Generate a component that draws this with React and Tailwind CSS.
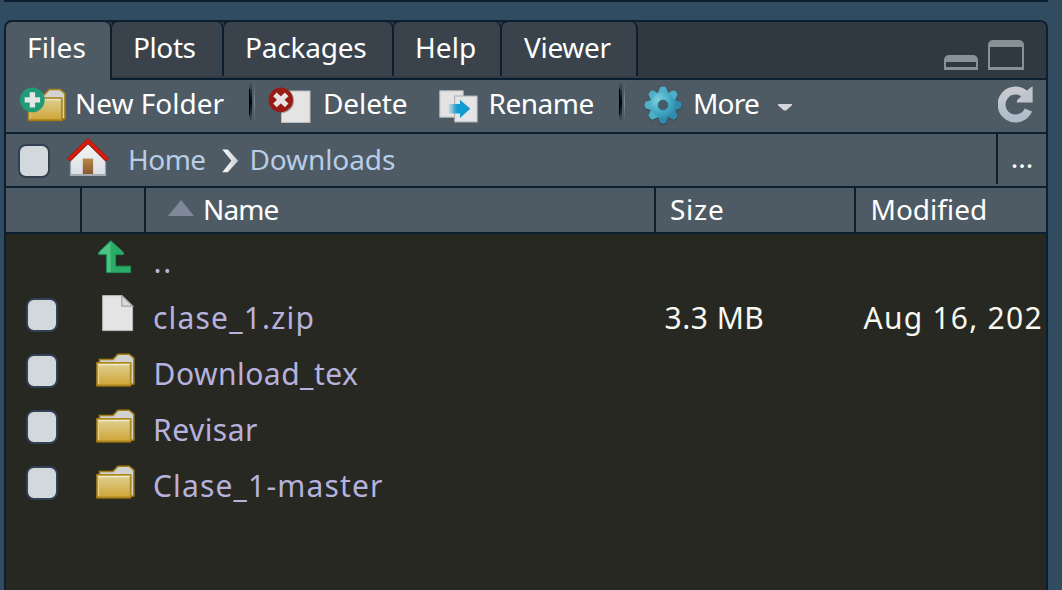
import React from "react";

function FolderShape() {
  return (
    <g>
      <path d="M3.5 20V6.5H17L22 1.2H33L37.8 5.2V31H30" fill="#d2d2d0" stroke="#a5801a" strokeWidth="1.6" />
      <path d="M34.8 11V30" stroke="#a5801a" strokeWidth="1" />
      <rect x="1" y="9.8" width="33.6" height="22.6" fill="url(#folderFront)" stroke="#ad871c" strokeWidth="1.6" />
      <path d="M2 11.6H33.6" stroke="#f0ecd0" strokeWidth="1.2" />
      <path d="M2.6 12V31" stroke="#e6d79a" strokeWidth="1" />
      <path d="M0.5 32.8H35" stroke="#a57c14" strokeWidth="1.4" />
    </g>
  );
}

function Gradients() {
  return (
    <svg className="absolute h-0 w-0" aria-hidden="true">
      <defs>
        <linearGradient id="folderFront" x1="0" y1="0" x2="0" y2="1">
          <stop offset="0" stopColor="#ddd294" />
          <stop offset="1" stopColor="#cfa436" />
        </linearGradient>
        <radialGradient id="gear" gradientUnits="userSpaceOnUse" cx="-5" cy="-5" r="24">
          <stop offset="0" stopColor="#7cd2de" />
          <stop offset="0.5" stopColor="#46a9c4" />
          <stop offset="1" stopColor="#2580a4" />
        </radialGradient>
        <linearGradient id="wall" x1="0" y1="0" x2="0" y2="1">
          <stop offset="0" stopColor="#f6f6f7" />
          <stop offset="1" stopColor="#dadee3" />
        </linearGradient>
        <linearGradient id="door" x1="0" y1="0" x2="0" y2="1">
          <stop offset="0" stopColor="#b9864a" />
          <stop offset="1" stopColor="#87592f" />
        </linearGradient>
        <linearGradient id="move" x1="0" y1="0" x2="1" y2="0">
          <stop offset="0" stopColor="#129bd2" stopOpacity="0.1" />
          <stop offset="0.4" stopColor="#129bd2" />
        </linearGradient>
        <linearGradient id="refresh" x1="0" y1="0" x2="0" y2="1">
          <stop offset="0" stopColor="#c9cad0" />
          <stop offset="1" stopColor="#aebccb" />
        </linearGradient>
        <linearGradient id="chevron" x1="0" y1="0" x2="1" y2="0">
          <stop offset="0" stopColor="#ffffff" />
          <stop offset="1" stopColor="#c8cbce" />
        </linearGradient>
      </defs>
    </svg>
  );
}

function FolderIcon() {
  return (
    <svg width="40" height="34" viewBox="0 0 40 34" className="shrink-0">
      <FolderShape />
    </svg>
  );
}

function NewFolderIcon() {
  return (
    <svg width="48" height="38" viewBox="0 0 48 38" className="shrink-0">
      <g transform="translate(7.5 1.4) scale(0.99 0.98)">
        <FolderShape />
      </g>
      <circle cx="12.3" cy="12.9" r="12.4" fill="#209b76" />
      <path d="M12.4 5.2V20.6M4.7 12.9H20.1" stroke="#e4e6e5" strokeWidth="5.4" />
    </svg>
  );
}

function DeleteIcon() {
  return (
    <svg width="46" height="38" viewBox="0 0 46 38" className="shrink-0">
      <rect x="13.5" y="4" width="28.5" height="31.5" fill="#e4e4e4" stroke="#b9bcbe" strokeWidth="1" />
      <circle cx="13.8" cy="13.8" r="12.4" fill="#3d474f" opacity="0.35" />
      <circle cx="12.8" cy="12.9" r="12.3" fill="#981b14" />
      <path d="M6.9 7.4L18.7 18.4M18.7 7.4L6.9 18.4" stroke="#e6e2e1" strokeWidth="5.2" />
    </svg>
  );
}

function RenameIcon() {
  return (
    <svg width="40" height="34" viewBox="0 0 40 34" className="shrink-0">
      <rect x="0.8" y="0.8" width="23.4" height="26.4" fill="#e3e3e3" stroke="#b5b8ba" strokeWidth="1" />
      <rect x="15.6" y="6" width="22.6" height="26" fill="#e5e5e5" stroke="#a9acaf" strokeWidth="1" />
      <path d="M9.5 14H21V9.8L31.3 18.8L21 28V23.6H9.5Z" fill="url(#move)" />
    </svg>
  );
}

const TEETH = [0, 45, 90, 135, 180, 225, 270, 315];

const GEAR_BUMP = "M-5.4 -11L-2.9 -17.8Q0 -19.4 2.9 -17.8L5.4 -11Z";

function GearIcon() {
  return (
    <svg width="40" height="42" viewBox="-20 -21 40 42" className="shrink-0">
      <g fill="#33454f" stroke="#33454f" strokeWidth="1.2" opacity="0.6" transform="translate(0 0.8)">
        <circle r="13" />
        {TEETH.map((a) => (
          <path key={a} d={GEAR_BUMP} transform={`rotate(${a})`} />
        ))}
      </g>
      <circle r="12.8" fill="url(#gear)" />
      {TEETH.map((a) => (
        <path key={a} fill={a > 60 && a < 200 ? "#2f8cae" : "#4cb0c8"} d={GEAR_BUMP} transform={`rotate(${a})`} />
      ))}
      <circle r="12.4" fill="url(#gear)" />
      <circle r="4.9" fill="#4a5963" stroke="#2c7089" strokeWidth="1" />
    </svg>
  );
}

function RefreshIcon() {
  return (
    <svg width="37" height="38" viewBox="0 0 37 38" className="shrink-0">
      <path d="M28.2 10.4A14 14 0 1 0 30.4 25" fill="none" stroke="url(#refresh)" strokeWidth="8" />
      <path d="M34.6 1.2V17.4H18.6L19.2 15L31 3.8Z" fill="#c0c5cd" />
    </svg>
  );
}

function HomeIcon() {
  return (
    <svg width="42" height="39" viewBox="0 0 42 39" className="shrink-0">
      <path d="M3.5 20L21 3L38.5 20V37.5H3.5Z" fill="url(#wall)" stroke="#9aa6ae" strokeWidth="1.2" />
      <path d="M3 37H39" stroke="#a5aeb5" strokeWidth="2.2" />
      <rect x="15.8" y="20.6" width="10.3" height="15.4" fill="url(#door)" />
      <path d="M1.6 22.2L21 3.2L40.4 22.2" fill="none" stroke="#8a1a16" strokeWidth="4.6" />
      <path d="M1.8 21.6L21 2.8L40.2 21.6" fill="none" stroke="#dc1c09" strokeWidth="3.2" />
    </svg>
  );
}

function UpIcon() {
  return (
    <svg width="34" height="34" viewBox="0 0 34 34" className="shrink-0">
      <path d="M12.8 0.8L25.4 12.2V14.6H17.6V26.2H32.6V32.6H8.4V14.6H0.6V12.2Z" fill="#29ac68" stroke="#1e9257" strokeWidth="1" />
      <path d="M12.6 1.8L2 12V13.8H9.2V32H12.8Z" fill="#4fc284" />
    </svg>
  );
}

function FileIcon() {
  return (
    <svg width="32" height="37" viewBox="0 0 32 37" className="shrink-0">
      <path d="M0.6 0.6H20L30.6 11.2V35.6H0.6Z" fill="#e4e4e4" stroke="#b8b8b8" strokeWidth="1" />
      <path d="M19.8 0.6V11.2H30.8Z" fill="#d9dada" stroke="#a3a6a8" strokeWidth="1.3" />
    </svg>
  );
}

function Separator() {
  return (
    <span className="flex h-10 w-1.5">
      <span className="w-[3px] bg-linear-to-b from-transparent via-black via-50% to-transparent" />
      <span className="-ml-[3px] mt-[7px] h-[26px] w-0.5 bg-black" />
      <span className="ml-1 w-px bg-linear-to-b from-transparent via-[#7d8890] to-transparent" />
    </span>
  );
}

function Checkbox() {
  return <span className="block h-[34px] w-8 shrink-0 rounded-[8px] border-2 border-[#2f4152] bg-[#d3d8dc]" />;
}

const TABS = [
  { label: "Files", box: "w-[104px] h-14 pl-[21px] tracking-[0.18px] rounded-t-[6px] bg-[#4e5b65]", active: true },
  { label: "Plots", box: "w-[110px] h-[54px] pl-[21px] tracking-[-0.4px]" },
  { label: "Packages", box: "w-[168px] h-[54px] pl-[21px] tracking-[-0.2px]" },
  { label: "Help", box: "w-[106px] h-[54px] pl-[21px] tracking-[0.08px]" },
  { label: "Viewer", box: "w-[134px] h-[54px] pl-[22px] tracking-[-0.3px]" },
];

function TabBar() {
  return (
    <div className="flex h-14 shrink-0 justify-between bg-[#303941]">
      <div className="flex">
        {TABS.map((t) => (
          <div
            key={t.label}
            className={t.active ? "h-14 rounded-t-[6px] bg-[#0b1f31]" : "h-14 rounded-tr-[6px] border-b-2 border-[#323b43] bg-[#0b1f31]"}
          >
            <div className={`mr-0.5 leading-[51px] whitespace-nowrap ${t.active ? "" : "rounded-t-[6px] bg-[#3a434b]"} ${t.box}`}>
              {t.label}
            </div>
          </div>
        ))}
      </div>
      <div className="mt-[18px] mr-[22px] flex h-[30px] items-end gap-2.5">
        <span className="h-[15px] w-[34px] rounded-t-[5px] border-x-[2.5px] border-t-[7px] border-b-[3px] border-[#879297]" />
        <span className="h-[30px] w-9 rounded-t-[5px] border-x-[2.5px] border-t-[7px] border-b-[3px] border-[#879297]" />
      </div>
    </div>
  );
}

function Toolbar() {
  return (
    <div className="flex h-[52px] shrink-0 items-start pl-3.5 leading-[46px] whitespace-nowrap">
      <div className="flex w-[229px]">
        <span className="w-[55px] pt-[7px]"><NewFolderIcon /></span>
        <span className="tracking-[0px]">New Folder</span>
      </div>
      <div className="w-[19px] pt-0.5"><Separator /></div>
      <div className="flex w-[171px]">
        <span className="w-[55px] pt-[7px]"><DeleteIcon /></span>
        <span className="tracking-[-0.1px]">Delete</span>
      </div>
      <div className="flex w-[180px]">
        <span className="w-[49.5px] pt-[10px]"><RenameIcon /></span>
        <span className="tracking-[-0.5px]">Rename</span>
      </div>
      <div className="w-6 pt-0.5"><Separator /></div>
      <div className="flex">
        <span className="w-[50px] pt-1"><GearIcon /></span>
        <span className="w-[85px] tracking-[-0.78px]">More</span>
        <svg width="14" height="7" viewBox="0 0 14 7" className="mt-6">
          <path d="M0 0H14V1.2L8.6 5.9Q7 7 5.4 5.9L0 1.2Z" fill="#d5d6dc" />
        </svg>
      </div>
      <div className="mr-[11px] ml-auto pt-[5px]"><RefreshIcon /></div>
    </div>
  );
}

function PathBar() {
  return (
    <div className="flex h-[52px] shrink-0">
      <div className="flex flex-1 pl-3 leading-[51px] whitespace-nowrap text-[#b8cde6]">
        <div className="w-[49px] pt-[10px]"><Checkbox /></div>
        <div className="w-[61px] pt-1"><HomeIcon /></div>
        <div className="w-[93.5px] tracking-[-0.5px]">Home</div>
        <svg width="17" height="24" viewBox="0 0 17 24" className="mt-[15px] mr-[11px]">
          <path d="M0.3 0.5H5.8L16.2 11.8L5.8 23.2H0.3L9.4 11.8Z" fill="url(#chevron)" />
        </svg>
        <div className="tracking-[-0.1px]">Downloads</div>
      </div>
      <div className="h-[50px] w-[50px] border-l-2 border-[#0b1f31] pl-[12.8px] leading-[47px]">...</div>
    </div>
  );
}

function HeaderRow() {
  return (
    <div className="flex h-11 shrink-0 leading-[42px] whitespace-nowrap">
      <div className="w-[76px] border-r-2 border-[#0b1f31]" />
      <div className="w-16 border-r-2 border-[#0b1f31]" />
      <div className="flex w-[510px] border-r-2 border-[#0b1f31] pl-[22px]">
        <svg width="26" height="16" viewBox="0 0 26 16" className="mt-3 mr-[9px]">
          <path d="M13 0L26 16H0Z" fill="#7f8898" />
        </svg>
        <span className="tracking-[-0.9px]">Name</span>
      </div>
      <div className="w-[200px] border-r-2 border-[#0b1f31] pl-3.5 tracking-[0.75px]">Size</div>
      <div className="flex-1 pl-[14.5px] tracking-[0px]">Modified</div>
    </div>
  );
}

const FILES = [
  { name: "clase_1.zip", icon: FileIcon, space: "tracking-[1.18px]", size: "3.3 MB", modified: "Aug 16, 202" },
  { name: "Download_tex", icon: FolderIcon, space: "tracking-[0.48px] pl-[0.5px]" },
  { name: "Revisar", icon: FolderIcon, space: "tracking-[0.47px]" },
  { name: "Clase_1-master", icon: FolderIcon, space: "tracking-[1.16px]" },
];

function FileList() {
  return (
    <div className="flex-1 bg-[#272822] text-[30px] leading-[58px] whitespace-nowrap text-[#b6b2dd]">
      <div className="flex h-[55px]">
        <div className="ml-[92px] w-[55.5px] pt-[6px]"><UpIcon /></div>
        <div className="leading-[55px] tracking-[1.7px]">..</div>
      </div>
      {FILES.map((f) => (
        <div key={f.name} className="flex h-14">
          <div className="ml-5 w-[70px] shrink-0 pt-[9px]"><Checkbox /></div>
          <div className={f.icon === FileIcon ? "w-[57px] shrink-0 pt-[6px] pl-[6px]" : "w-[57px] shrink-0 pt-2"}><f.icon /></div>
          <div className={`w-[511.5px] shrink-0 ${f.space}`}>{f.name}</div>
          <div className="w-[199px] shrink-0 tracking-[0.5px] text-[#f8f8f2]">{f.size}</div>
          <div className="w-[182px] tracking-[1.25px] text-[#f8f8f2]">{f.modified}</div>
        </div>
      ))}
    </div>
  );
}

export default function App() {
  return (
    <div className="flex h-[590px] w-[1062px] flex-col overflow-hidden bg-[#314b61] pr-3.5 pl-1 font-['Noto_Sans',sans-serif] text-[28px] text-white">
      <Gradients />
      <div className="mb-[18px] h-0.5 shrink-0 bg-[#0b1f31]" />
      <div className="flex flex-1 flex-col overflow-hidden rounded-t-[8px] border-x-2 border-t-2 border-[#0b1f31] bg-[#4e5b65]">
        <TabBar />
        <div className="ml-[104px] h-0.5 shrink-0 bg-[#0b1f31]" />
        <Toolbar />
        <div className="h-0.5 shrink-0 bg-[#0b1f31]" />
        <PathBar />
        <div className="h-0.5 shrink-0 bg-[#0b1f31]" />
        <HeaderRow />
        <div className="h-0.5 shrink-0 bg-[#0b1f31]" />
        <FileList />
      </div>
    </div>
  );
}
